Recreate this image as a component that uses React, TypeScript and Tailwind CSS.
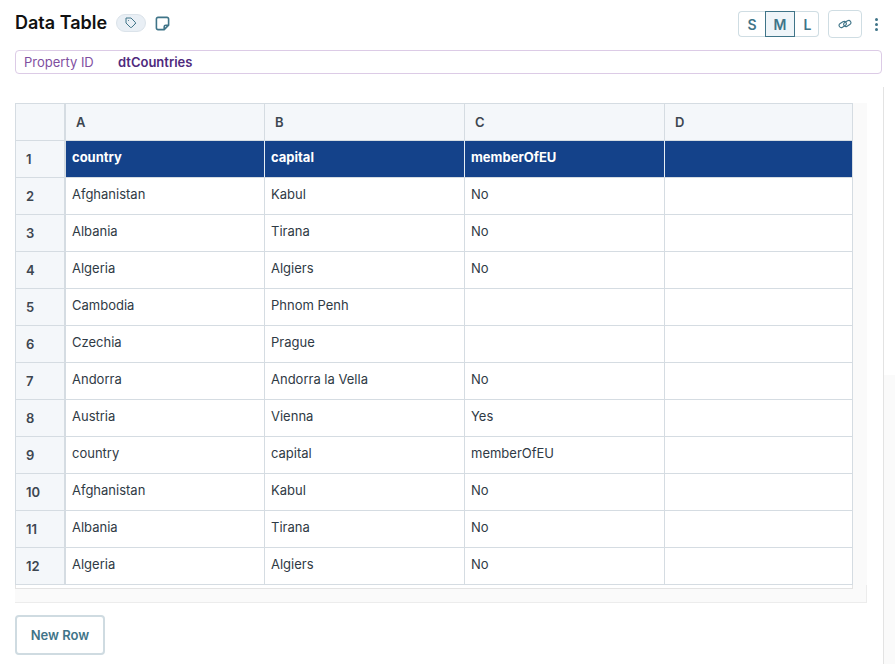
import { FiTag } from 'react-icons/fi';

const rows = [
  ['Afghanistan', 'Kabul', 'No'],
  ['Albania', 'Tirana', 'No'],
  ['Algeria', 'Algiers', 'No'],
  ['Cambodia', 'Phnom Penh', ''],
  ['Czechia', 'Prague', ''],
  ['Andorra', 'Andorra la Vella', 'No'],
  ['Austria', 'Vienna', 'Yes'],
  ['country', 'capital', 'memberOfEU'],
  ['Afghanistan', 'Kabul', 'No'],
  ['Albania', 'Tirana', 'No'],
  ['Algeria', 'Algiers', 'No'],
];

const gridCols = 'grid grid-cols-[51px_199px_200px_200px_188px]';

function SizeButtons() {
  return (
    <div className="flex h-[26px] text-[14px] font-semibold text-[#3f7488]">
      <span className="flex w-[27px] items-center justify-center rounded-l-[4px] border border-r-0 border-[#cfdde3]">S</span>
      <span className="flex w-[30px] items-center justify-center border border-[#3f7488] bg-[#eff5f9]">M</span>
      <span className="flex w-[24px] items-center justify-center rounded-r-[4px] border border-l-0 border-[#cfdde3] pl-[2px]">L</span>
    </div>
  );
}

function NoteIcon() {
  return (
    <svg width="15" height="15" viewBox="0 0 16 16" fill="none" stroke="#3f7488" strokeWidth="1.7" strokeLinejoin="round">
      <path d="M3.2 1.5h9.6a1.7 1.7 0 0 1 1.7 1.7v6.6l-4.7 4.7H3.2a1.7 1.7 0 0 1-1.7-1.7V3.2a1.7 1.7 0 0 1 1.7-1.7z" />
      <path d="M14.5 9.8h-3a1.7 1.7 0 0 0-1.7 1.7v3" />
    </svg>
  );
}

// two flat chain links, tilted up to the right
function LinkIcon() {
  return (
    <svg width="14" height="12" viewBox="0 0 14 12" fill="none" stroke="#3f7488" strokeWidth="1.1">
      <rect x="0.9" y="4.3" width="7.6" height="4.4" rx="2.2" transform="rotate(-32 4.7 6.5)" />
      <rect x="5.5" y="3.3" width="7.6" height="4.4" rx="2.2" transform="rotate(-32 9.3 5.5)" />
    </svg>
  );
}

function Kebab() {
  return (
    <div className="flex w-[4px] flex-col gap-[2px]">
      <span className="h-[3px] w-[3px] rounded-full bg-[#3f7488]" />
      <span className="h-[3px] w-[3px] rounded-full bg-[#3f7488]" />
      <span className="h-[3px] w-[3px] rounded-full bg-[#3f7488]" />
    </div>
  );
}

export default function App() {
  return (
    <div className="h-[664px] w-[895px] overflow-hidden bg-white font-['Inter',sans-serif] text-[13px] text-[#2f3a45]">
      {/* Title bar */}
      <div className="flex h-[50px] items-start justify-between pl-[15px] pr-[16px]">
        <div className="flex items-center pt-[11px]">
          <h1 className="text-[18px] leading-[24px] font-semibold text-[#111]">Data Table</h1>
          <span className="ml-[9px] flex h-[18px] w-[30px] items-center justify-center rounded-full border border-[#dbe3ea] bg-[#e9eff5] text-[#3f7488]">
            <FiTag size={12} />
          </span>
          <span className="ml-[9px]"><NoteIcon /></span>
        </div>
        <div className="flex items-center pt-[10px]">
          <SizeButtons />
          <span className="ml-[9px] flex h-[28px] w-[34px] items-center justify-center rounded-[4px] border border-[#cfdde3]">
            <LinkIcon />
          </span>
          <span className="ml-[13px]"><Kebab /></span>
        </div>
      </div>

      {/* Property id */}
      <div className="mx-[15px] mr-[13px] flex h-[24px] items-center rounded-[4px] border border-[#dccbe6] pl-[8px] pt-[1px]">
        <span className="w-[94px] text-[#7f4f9f]">Property ID</span>
        <span className="font-semibold text-[#4f2a7d]">dtCountries</span>
      </div>

      <div className="mt-[13px] flex">
        <div className="w-[883px] pl-[15px] pr-[16px] pt-[16px]">
          <div className="w-[852px] bg-[#fafafa]">
            <div className="w-[838px] border-t border-[#d5dce2] bg-white">
              <div className={`${gridCols} h-[37px] border-b border-[#d5dce2] bg-[#f4f7fa] text-[13px] font-semibold text-[#3d4650]`}>
                <div className="border-x-2 border-l-1 border-[#d5dce2]" />
                {['A', 'B', 'C', 'D'].map((c) => (
                  <div key={c} className="flex items-center border-r border-[#d5dce2] pl-[10px] pt-[1px]">{c}</div>
                ))}
              </div>
              <div className={`${gridCols} h-[37px] border-b border-[#d5dce2]`}>
                <div className="flex items-center border-x-2 border-l-1 border-[#d5dce2] bg-[#f4f7fa] pl-[10px] pt-[2px] font-semibold text-[#3d4650]">1</div>
                {['country', 'capital', 'memberOfEU', ''].map((c, i) => (
                  <div key={i} className="flex items-center border-r border-[#e6eef5] bg-[#14428a] pb-[2px] pl-[6px] font-bold text-white last:border-r-[#d5dce2]">{c}</div>
                ))}
              </div>
              {rows.map((r, i) => (
                <div key={i} className={`${gridCols} h-[37px] border-b border-[#d5dce2]`}>
                  <div className="flex items-center border-x-2 border-l-1 border-[#d5dce2] bg-[#f4f7fa] pl-[10px] pt-[2px] font-semibold text-[#3d4650]">{i + 2}</div>
                  {[...r, ''].map((c, j) => (
                    <div key={j} className="flex items-center border-r border-[#d5dce2] pb-[2px] pl-[6px]">{c}</div>
                  ))}
                </div>
              ))}
            </div>
            <div className="h-[18px] w-[852px] border-b border-r border-[#ececec] bg-[#fafafa]">
              <div className="h-[4px] w-[838px] border-x border-b border-[#e3e3e3] bg-white" />
            </div>
          </div>
          <button className="mt-[12px] h-[40px] w-[90px] rounded-[4px] border-2 border-[#cfdbe1] bg-white pt-[1px] text-[13px] font-semibold text-[#3f7488]">New Row</button>
        </div>
        <div className="h-[577px] flex-1 border-l border-[#e3e3e3]">
          <div className="h-[288px]" />
          <div className="h-full bg-[#fafafa]" />
        </div>
      </div>
    </div>
  );
}
